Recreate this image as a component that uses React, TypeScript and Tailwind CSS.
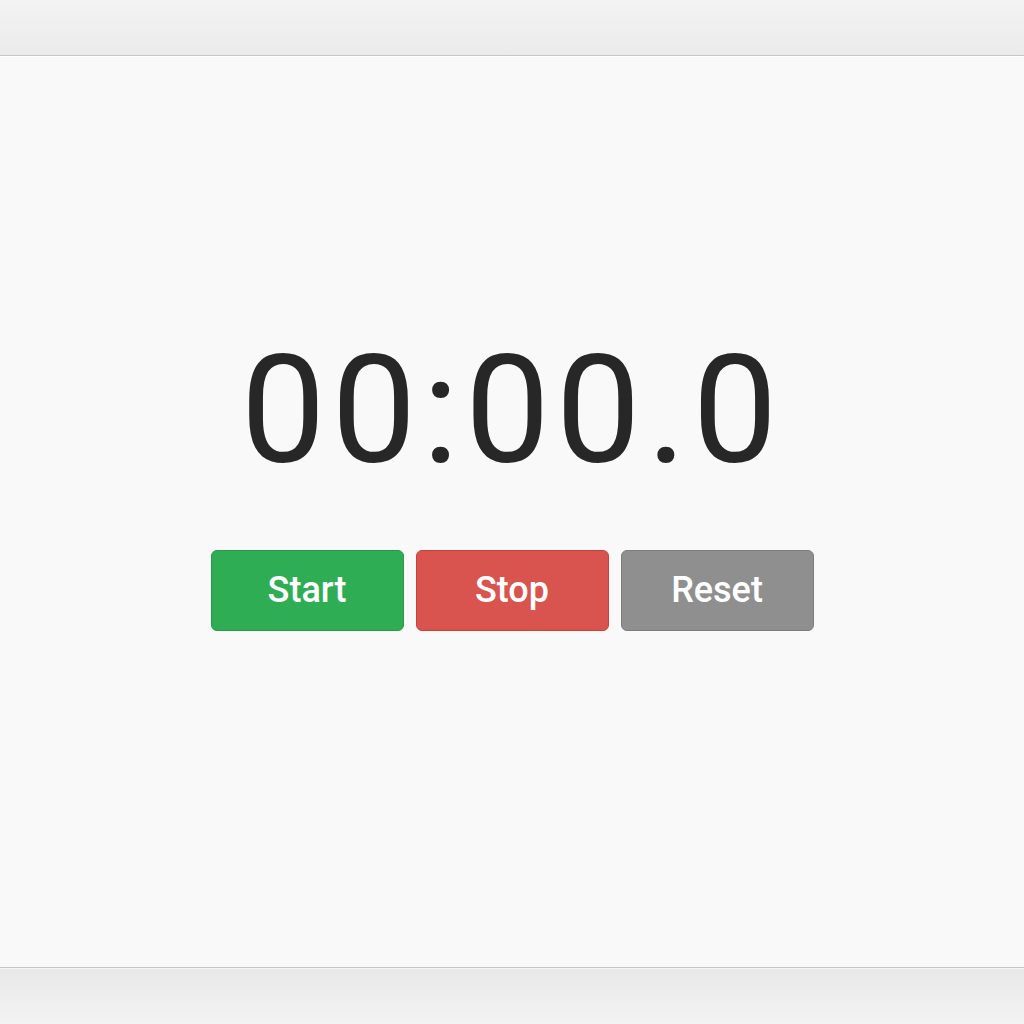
const buttons = [
  { label: "Start", cls: "bg-[#2fad55] border-[#26994a]" },
  { label: "Stop", cls: "bg-[#d9534f] border-[#c8413d]" },
  { label: "Reset", cls: "bg-[#8f8f8f] border-[#7d7d7d]" },
];

const App = () => {
  return (
    <div className="flex h-[1024px] w-full flex-col bg-[#f9f9f9] font-['Roboto',sans-serif]">
      <div className="h-[56px] shrink-0 border-b border-[#c6c6c6] bg-gradient-to-b from-[#f3f3f3] to-[#ebebeb]"></div>
      <main className="flex flex-1 flex-col items-center justify-center border-t border-white pb-[59px]">
        <h1 className="text-[151px] font-normal leading-none tracking-[6px] text-[#272727]">
          00:00.0
        </h1>
        <div className="mt-[64px] flex gap-[12px]">
          {buttons.map((b) => (
            <button
              key={b.label}
              className={`flex h-[81px] w-[193px] items-center justify-center rounded-[6px] border text-[36px] font-medium text-white ${b.cls}`}
            >
              {b.label}
            </button>
          ))}
        </div>
      </main>
      <div className="h-[57px] shrink-0 border-t border-[#c6c6c6] bg-gradient-to-b from-[#e8e8e8] to-[#f3f3f3] shadow-[inset_0_1px_0_#f7f7f7]"></div>
    </div>
  );
};

export default App;
